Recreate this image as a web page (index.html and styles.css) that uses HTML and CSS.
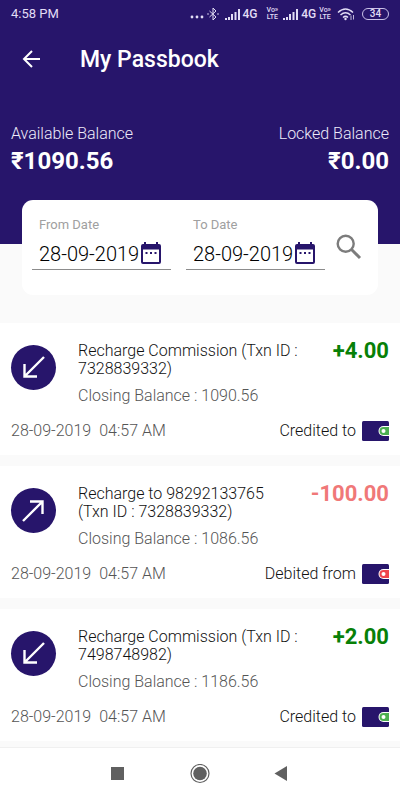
FILE: index.html
```html
<!DOCTYPE html>
<html lang="en">
<head>
<meta charset="utf-8">
<meta name="viewport" content="width=device-width, initial-scale=1">
<title>My Passbook</title>
<link rel="stylesheet" href="styles.css">
</head>
<body>
<svg class="defs" aria-hidden="true">
  <symbol id="signal" viewBox="0 0 16 12"><path d="M0 12v-2h2v2zM3 12V9h2v3zM6 12V6h2v6zM9.500 12V4h2v8zM13 12V1h2v11z"/></symbol>
  <symbol id="calendar" viewBox="0 0 22 24"><path fill-rule="evenodd" d="M4 0h2v2h10V0h2v2h1a2 2 0 0 1 2 2v16a2 2 0 0 1-2 2H3a2 2 0 0 1-2-2V4a2 2 0 0 1 2-2h1zM3 7.500v12.500h16V7.500zM5.500 10h2v2h-2zM10 10h2v2h-2zM14.500 10h2v2h-2z"/></symbol>
  <symbol id="arrow-in" viewBox="0 0 45 45"><path d="M33 12L14 31M13.500 19v12.500H26" fill="none" stroke="#fff" stroke-width="2.400"/></symbol>
  <symbol id="arrow-out" viewBox="0 0 45 45"><path d="M12 33l19-19M19 13.500h12.500V26" fill="none" stroke="#fff" stroke-width="2.400"/></symbol>
  <symbol id="wallet" viewBox="0 0 27 20"><rect width="27" height="20" rx="1.500" fill="#27156b"/><path d="M27 5h-5.500a5 5 0 0 0 0 10H27z" fill="#fff"/><path d="M27 6h-5.500a4 4 0 0 0 0 8H27z" fill="currentColor"/><circle cx="21.500" cy="10" r="2" fill="#fff"/></symbol>
</svg>
<header class="top">
  <div class="status">
    <span>4:58 PM</span>
    <div class="status-icons">
      <svg class="dots" viewBox="0 0 14 12"><circle cx="2" cy="9" r="1.400"/><circle cx="7" cy="9" r="1.400"/><circle cx="12" cy="9" r="1.400"/></svg>
      <svg class="bluetooth" viewBox="0 0 12 14"><path d="M2.500 4l6.500 6-3 3V1l3 3-6.500 6" fill="none" stroke="currentColor"/><circle cx="1" cy="7" r=".8"/><circle cx="11" cy="7" r=".8"/></svg>
      <svg class="signal"><use href="#signal"/></svg>
      <span class="net">4G</span>
      <span class="volte first"><span>Vo»</span><span>LTE</span></span>
      <svg class="signal"><use href="#signal"/></svg>
      <span class="net">4G</span>
      <span class="volte"><span>Vo»</span><span>LTE</span></span>
      <svg class="wifi" viewBox="0 0 18 14"><path d="M1 5.500q7.500-7 15 0M3.500 8q5-4.500 10 0M6 10.500q2.500-2.200 5 0" fill="none" stroke="currentColor" stroke-width="1.500"/><circle cx="8.500" cy="12" r="1.200"/><path d="M14 13V8.500M16.500 8v4.500" stroke="currentColor" stroke-width=".8"/></svg>
      <span class="battery">34</span>
    </div>
  </div>
  <div class="bar">
    <button class="back" type="button" aria-label="Back"><svg viewBox="0 0 20 20"><path d="M18 9H1.500M10 1L2 9l8 8" fill="none" stroke="currentColor" stroke-width="2"/></svg></button>
    <h1>My Passbook</h1>
  </div>
  <div class="balances">
    <div><div class="label">Available Balance</div><div class="sum">₹1090.56</div></div>
    <div class="right"><div class="label">Locked Balance</div><div class="sum">₹0.00</div></div>
  </div>
</header>
<form class="filter">
  <div class="field">
    <label for="from">From Date</label>
    <div class="box"><input id="from" type="text" value="28-09-2019"><svg><use href="#calendar"/></svg></div>
  </div>
  <div class="field">
    <label for="to">To Date</label>
    <div class="box"><input id="to" type="text" value="28-09-2019"><svg><use href="#calendar"/></svg></div>
  </div>
  <button class="search" type="button" aria-label="Search"><svg viewBox="0 0 26 26"><circle cx="9.700" cy="9.700" r="8" fill="none" stroke="currentColor" stroke-width="2.400"/><path d="M15.500 15.500l8.500 8.500" stroke="currentColor" stroke-width="3"/></svg></button>
</form>
<main class="list">
  <article class="txn">
    <div class="main">
      <svg class="dir"><use href="#arrow-in"/></svg>
      <div><div class="title">Recharge Commission (Txn&nbsp;ID&nbsp;: 7328839332)</div><div class="closing">Closing Balance : 1090.56</div></div>
      <div class="amount credit">+4.00</div>
    </div>
    <div class="foot"><div class="when"><span>28-09-2019</span><span>04:57 AM</span></div><div class="via"><span>Credited to</span><svg class="green"><use href="#wallet"/></svg></div></div>
  </article>
  <article class="txn">
    <div class="main">
      <svg class="dir"><use href="#arrow-out"/></svg>
      <div><div class="title">Recharge to 98292133765 (Txn&nbsp;ID&nbsp;: 7328839332)</div><div class="closing">Closing Balance : 1086.56</div></div>
      <div class="amount debit">-100.00</div>
    </div>
    <div class="foot"><div class="when"><span>28-09-2019</span><span>04:57 AM</span></div><div class="via"><span>Debited from</span><svg class="red"><use href="#wallet"/></svg></div></div>
  </article>
  <article class="txn">
    <div class="main">
      <svg class="dir"><use href="#arrow-in"/></svg>
      <div><div class="title">Recharge Commission (Txn&nbsp;ID&nbsp;: 7498748982)</div><div class="closing">Closing Balance : 1186.56</div></div>
      <div class="amount credit">+2.00</div>
    </div>
    <div class="foot"><div class="when"><span>28-09-2019</span><span>04:57 AM</span></div><div class="via"><span>Credited to</span><svg class="green"><use href="#wallet"/></svg></div></div>
  </article>
</main>
<nav class="nav">
  <button type="button" aria-label="Recent apps"><svg viewBox="0 0 20 20"><path d="M3 3h13v13H3z"/></svg></button>
  <button type="button" aria-label="Home"><svg viewBox="0 0 20 20"><circle cx="10" cy="9.500" r="9" fill="none" stroke="currentColor" stroke-width="1.200"/><circle cx="10" cy="9.500" r="6.800"/></svg></button>
  <button type="button" aria-label="Go back"><svg viewBox="0 0 20 20"><path d="M2.500 9.500L15 2v15z"/></svg></button>
</nav>
</body>
</html>
```
FILE: styles.css
```css
* { box-sizing: border-box; }
body {
  margin: 0;
  min-height: 100vh;
  display: flex;
  flex-direction: column;
  background: #fafafa;
  color: #111;
  font: 300 16px/18px Roboto, sans-serif;
}
svg { display: block; flex: none; fill: currentColor; }
button { padding: 0; border: 0; background: none; color: inherit; }
.defs { position: absolute; width: 0; height: 0; }

.top { height: 244px; background: #27156b; color: #fff; }
.status {
  display: flex;
  align-items: center;
  justify-content: space-between;
  height: 28px;
  padding: 0 11px;
  color: #e2ddf5;
  font-size: 13px;
  font-weight: 400;
}
.status-icons { display: flex; align-items: center; font-weight: 500; }
.dots { width: 14px; height: 12px; margin-right: 3px; }
.bluetooth { width: 12px; height: 14px; margin-right: 6px; }
.signal { width: 16px; height: 12px; margin-right: 2px; }
.net { font-size: 12px; }
.volte { display: flex; flex-direction: column; align-items: center; margin-left: 3px; font-size: 7px; line-height: 7px; }
.volte.first { margin: 0 5px 0 9px; }
.wifi { width: 18px; height: 14px; margin: 0 7px 0 6px; }
.battery {
  width: 27px;
  height: 12px;
  border: 1px solid #c9c1e8;
  border-radius: 6px;
  font-size: 10px;
  line-height: 10px;
  text-align: center;
}
.bar { display: flex; align-items: center; gap: 38px; height: 64px; padding: 0 22px; }
.back svg { width: 20px; height: 20px; }
h1 { margin: 0; font-size: 23px; line-height: 28px; font-weight: 500; }
.balances { display: flex; justify-content: space-between; padding: 33px 11px 0; }
.right { text-align: right; }
.label { color: #eeebfa; }
.sum { margin-top: 4px; font-size: 24px; line-height: 28px; font-weight: 700; }

.filter {
  display: flex;
  gap: 15px;
  height: 95px;
  margin: -44px 22px 28px;
  padding: 16px 16px 0 10px;
  border-radius: 11px;
  background: #fff;
}
.field { flex: 1; min-width: 0; }
.field label { display: block; padding-left: 7px; color: #a0a0a0; font-size: 13px; font-weight: 400; line-height: 18px; }
.box { display: flex; align-items: center; height: 36px; padding: 4px 9px 0 7px; border-bottom: 1px solid #8c8c8c; color: #27156b; }
.box input { flex: 1; min-width: 0; width: 0; padding: 0; border: 0; outline: 0; background: none; color: #000; font: 300 20px/28px Roboto, sans-serif; }
.box svg { width: 22px; height: 24px; }
.search { align-self: flex-start; margin: 18px 0 0 -4px; color: #7c7c7c; }
.search svg { width: 26px; height: 26px; }

.list { display: flex; flex-direction: column; gap: 11px; }
.txn { padding: 19px 11px 14px; background: #fff; }
.main { display: grid; grid-template-columns: 67px 1fr 88px; }
.dir { width: 45px; height: 45px; margin-top: 3px; border-radius: 50%; background: #27156b; }
.closing { margin-top: 9px; color: #555; }
.amount { font-size: 22px; line-height: 18px; font-weight: 700; text-align: right; white-space: nowrap; }
.credit { color: #078007; }
.debit { color: #f07878; }
.foot { display: flex; align-items: center; justify-content: space-between; margin-top: 16px; line-height: 20px; }
.when { display: flex; gap: 8px; color: #555; }
.via { display: flex; align-items: center; gap: 6px; }
.via svg { width: 27px; height: 20px; }
.green { color: #4caf50; }
.red { color: #f0444c; }

.nav {
  display: flex;
  align-items: center;
  justify-content: center;
  gap: 62px;
  height: 53px;
  margin-top: auto;
  border-top: 1px solid #f0f0f0;
  background: #fff;
  color: #606060;
}
.nav svg { width: 20px; height: 20px; }
```
